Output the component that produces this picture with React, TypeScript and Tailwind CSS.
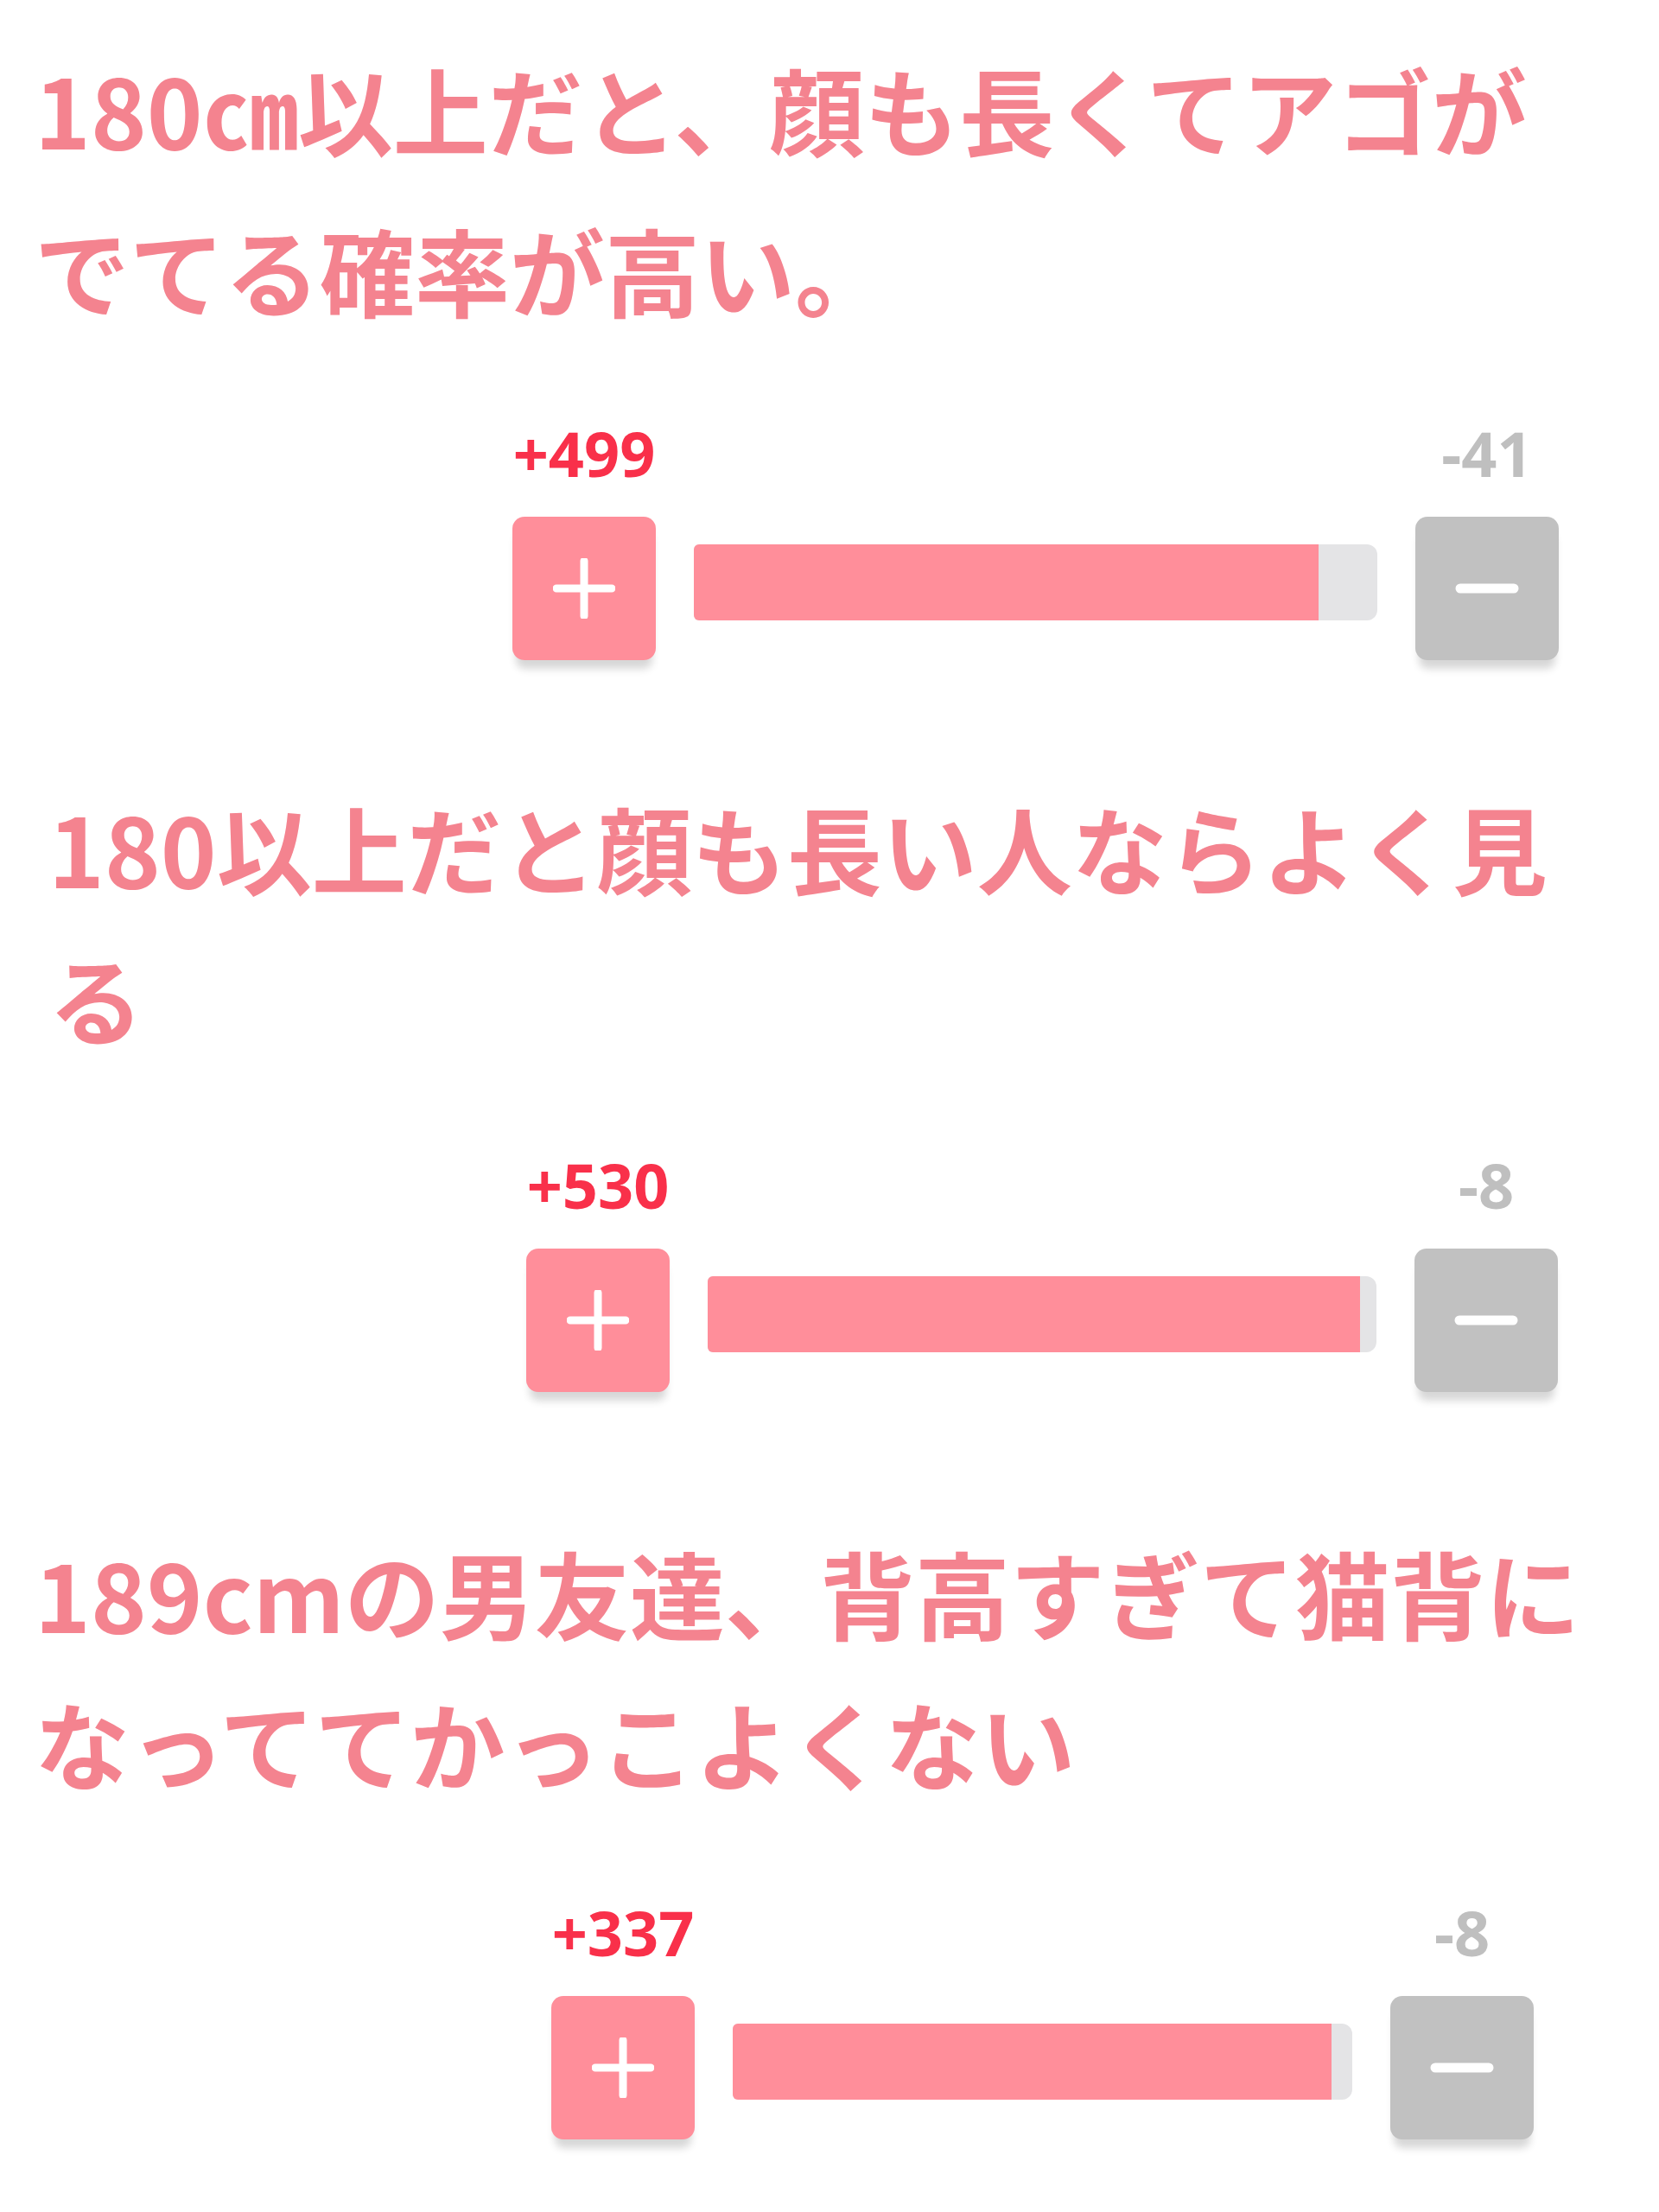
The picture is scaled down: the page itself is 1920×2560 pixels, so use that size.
type Post = {
  text: string
  up: number
  down: number
  head: string
  row: string
  gap: string
}

const posts: Post[] = [
  {
    text: "180㎝以上だと、顔も長くてアゴがでてる確率が高い。",
    up: 499,
    down: 41,
    head: "pt-[32px] pl-[40px] leading-[186px]",
    row: "mt-[80px] ml-[593px] w-[1211px]",
    gap: "mb-[129px]",
  },
  {
    text: "180以上だと顔も長い人ならよく見る",
    up: 530,
    down: 8,
    head: "pl-[56px] leading-[174px]",
    row: "mt-[90px] ml-[609px] w-[1194px]",
    gap: "mb-[144px]",
  },
  {
    text: "189cmの男友達、背高すぎて猫背になっててかっこよくない",
    up: 337,
    down: 8,
    head: "pl-[40px] leading-[174px]",
    row: "mt-[93px] ml-[638px] w-[1137px]",
    gap: "mb-[60px]",
  },
]

function PlusIcon() {
  return (
    <svg width="72" height="70" viewBox="0 0 72 70" fill="none">
      <path d="M36 3V67M4 35H68" stroke="white" strokeWidth="9" strokeLinecap="round" />
    </svg>
  )
}

function MinusIcon() {
  return (
    <svg width="74" height="14" viewBox="0 0 74 14" fill="none">
      <path d="M6 7H68" stroke="white" strokeWidth="11" strokeLinecap="round" />
    </svg>
  )
}

function VoteBar({ post }: { post: Post }) {
  const pct = (post.up / (post.up + post.down)) * 100 - 1
  return (
    <div className={`flex flex-col ${post.row}`}>
      <div className="flex justify-between font-['Noto_Sans',sans-serif] font-bold text-[72px] leading-[80px]">
        <span className="w-[166px] text-center text-[#f9304a]">+{post.up}</span>
        <span className="w-[166px] text-center text-[#bfbfbf]">-{post.down}</span>
      </div>
      <div className="mt-[34px] flex items-center">
        <button className="flex h-[166px] w-[166px] shrink-0 items-center justify-center rounded-[14px] bg-[#ff8e9a] shadow-[0_14px_10px_-4px_rgba(0,0,0,0.16)]">
          <PlusIcon />
        </button>
        <div className="mx-[44px] mb-[14px] h-[88px] flex-1 overflow-hidden rounded-r-[12px] rounded-l-[6px] bg-[#e4e4e6]">
          <div className="h-full bg-[#ff8e9a]" style={{ width: `${pct}%` }} />
        </div>
        <button className="flex h-[166px] w-[166px] shrink-0 items-center justify-center rounded-[14px] bg-[#c1c1c1] shadow-[0_14px_10px_-4px_rgba(0,0,0,0.16)]">
          <MinusIcon />
        </button>
      </div>
    </div>
  )
}

export default function App() {
  return (
    <div className="min-h-[2560px] w-[1920px] bg-white">
      {posts.map((post, i) => (
        <section key={i} className={post.gap}>
          <h2
            className={`pr-[64px] font-['Noto_Sans_CJK_JP',sans-serif] text-[110px] font-bold text-[#f4838f] ${post.head}`}
          >
            {post.text}
          </h2>
          <VoteBar post={post} />
        </section>
      ))}
    </div>
  )
}
